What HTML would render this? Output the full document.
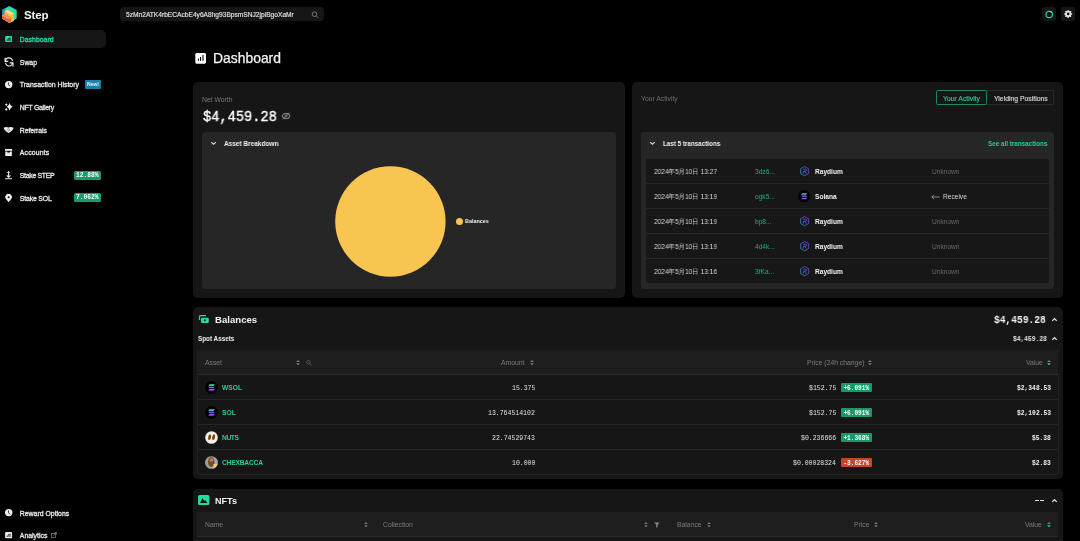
<!DOCTYPE html>
<html><head><meta charset="utf-8">
<style>
*{margin:0;padding:0;box-sizing:border-box}
html,body{width:1080px;height:541px;overflow:hidden;background:#000;color:#fff;font-family:"Liberation Sans",sans-serif}
.a,.nav,.row,.thc{will-change:transform}
.a{position:absolute;white-space:nowrap}
.mono{font-family:"Liberation Mono",monospace}
.nav{position:absolute;left:0;width:105px;height:18px;font-size:6.9px;color:#e8e8e8;white-space:nowrap}
.nav svg{position:absolute;left:4px;top:4px}
.nav .t{position:absolute;left:19.8px;top:1px;line-height:18px;-webkit-text-stroke:0.3px currentColor}
.badge{position:absolute;left:73.5px;top:4.8px;height:8.8px;width:27.5px;background:#179c6c;border-radius:1.5px;color:#fff;font-family:"Liberation Mono",monospace;font-size:6.3px;font-weight:bold;line-height:9px;text-align:center}
.card{position:absolute;background:#161616;border-radius:5px}
.muted{color:#8a8a8a}
.green{color:#25d09a}
.row{position:absolute;height:25px;font-size:6.6px;line-height:25px;white-space:nowrap}
.th{position:absolute;background:#1e1e1e;border-bottom:1px solid #2a2a2a;height:25px}
.thc{position:absolute;top:0;line-height:26px;font-size:6.8px;color:#7c7c7c;white-space:nowrap}
.sort{position:absolute;width:4px;height:7px}
.sep{position:absolute;height:1px;background:#262626}
.pb{display:inline-block;width:31px;height:9px;line-height:9px;border-radius:1.5px;text-align:center;font-weight:bold;color:#fff;vertical-align:middle;font-size:6.1px}
</style></head><body>

<!-- Logo -->
<svg class="a" style="left:0;top:3px" width="20" height="22" viewBox="0 0 20 22">
  <polygon points="9.3,3 16.7,7 16.7,15.5 9.3,20 2,15.5 2,7" fill="#28dcae"/>
  <polygon points="2,7 5.2,5.2 5.2,12 2,13.8" fill="#2a8fc4"/>
  <polygon points="4.5,8.5 7.5,6.8 14,10.5 14,18 9.3,20 4.5,17" fill="#f9bf3b"/>
  <polygon points="4.5,8.5 7.5,6.8 14,10.5 11,12.3" fill="#fcd58a"/>
  <polygon points="2,12.5 4.5,11 11,14.7 11,18.5 9.3,20 2,15.5" fill="#f26434"/>
  <polygon points="2,12.5 4.5,11 11,14.7 8.5,16.2" fill="#f8946c"/>
</svg>
<div class="a" style="left:24px;top:6px;font-size:11.6px;letter-spacing:-0.2px;font-weight:bold;line-height:16px;color:#f2f2f2;top:7px">Step</div>

<!-- Search -->
<div class="a" style="left:120px;top:7px;width:204px;height:14.3px;background:#161616;border-radius:4px"></div>
<div class="a" style="left:126px;top:8px;line-height:14px;font-size:6.63px;color:#e0e0e0;-webkit-text-stroke:0.15px #e0e0e0">5zMn2ATK4rbECAcbE4y6A8hg93BpsmSNJ2jpiBgoXaMr</div>
<svg class="a" style="left:311px;top:11px" width="8" height="8" viewBox="0 0 8 8"><circle cx="3.5" cy="3.2" r="2.3" stroke="#8a8a8a" stroke-width="0.85" fill="none"/><line x1="5.2" y1="4.9" x2="7.1" y2="6.8" stroke="#8a8a8a" stroke-width="0.9"/></svg>

<!-- top-right buttons -->
<div class="a" style="left:1042px;top:7px;width:14px;height:14px;background:#161616;border-radius:3px"></div>
<svg class="a" style="left:1045px;top:10px" width="9" height="9" viewBox="0 0 9 9"><circle cx="4.2" cy="4.4" r="3.2" stroke="#27d9a3" stroke-width="1.1" fill="none"/><path d="M4.2 1.2 A3.2 3.2 0 0 1 7 2.8" stroke="#c8c8c8" stroke-width="1.1" fill="none"/></svg>
<div class="a" style="left:1061px;top:7px;width:14px;height:14px;background:#161616;border-radius:3px"></div>
<svg class="a" style="left:1063px;top:9px" width="10" height="10" viewBox="0 0 10 10"><g fill="#e6e6e6"><circle cx="5.2" cy="4.9" r="3"/><rect x="4.45" y="0.9" width="1.5" height="8" rx="0.5" transform="rotate(0.0 5.2 4.9)"/><rect x="4.45" y="0.9" width="1.5" height="8" rx="0.5" transform="rotate(45.0 5.2 4.9)"/><rect x="4.45" y="0.9" width="1.5" height="8" rx="0.5" transform="rotate(90.0 5.2 4.9)"/><rect x="4.45" y="0.9" width="1.5" height="8" rx="0.5" transform="rotate(135.0 5.2 4.9)"/></g><circle cx="5.2" cy="4.9" r="1.3" fill="#161616"/></svg>

<!-- Sidebar -->
<div class="nav" style="top:30px;width:105.8px;background:#161616;border-radius:0 5px 5px 0;color:#27d9a3">
  <svg width="10" height="10" viewBox="0 0 10 10" style="left:4px;top:4px"><rect x="1.1" y="1.9" width="7" height="6.1" rx="1" fill="#27d9a3"/><path d="M2.6 6.9 L5.6 3.4 L7.2 3.4 L7.2 6.9 Z" fill="#0d3a2c" fill-opacity="0.55"/><path d="M3 6.6 L5.4 3.8" stroke="#0b2a20" stroke-width="0.9"/></svg>
  <div class="t">Dashboard</div></div>
<div class="nav" style="top:53px"><svg width="12" height="11" viewBox="0 0 12 11" style="left:3px;top:4px"><g stroke="#eee" stroke-width="1.2" fill="none"><path d="M2.6 4.4 A3.4 3.4 0 0 1 9.4 4"/><path d="M9.4 5.4 A3.4 3.4 0 0 1 2.6 5.8"/><path d="M2.1 0.8 V4.3 H5.3"/><path d="M9.9 9.4 V5.8 H6.7"/></g></svg><div class="t">Swap</div></div>
<div class="nav" style="top:75px"><svg width="10" height="10" viewBox="0 0 10 10" style="left:4px;top:5px"><circle cx="4.7" cy="4.6" r="3.7" fill="#eee"/><path d="M4.4 2.4 L4.6 4.8 L6 6.3" stroke="#111" stroke-width="0.8" fill="none"/></svg><div class="t">Transaction History</div>
  <div class="a" style="left:85px;top:5px;width:16px;height:9px;background:#1d80aa;border-radius:1px;font-size:5px;font-weight:bold;line-height:9px;text-align:center;color:#e8f4fa">New!</div></div>
<div class="nav" style="top:98px"><svg width="10" height="10" viewBox="0 0 10 10" style="left:4px;top:5px"><path d="M5.6 -0.04999999999999982 Q6.2379999999999995 2.992 8.5 3.85 Q6.2379999999999995 4.708 5.6 7.75 Q4.962 4.708 2.6999999999999997 3.85 Q4.962 2.992 5.6 -0.04999999999999982ZM2.3 0.20000000000000018 Q2.86 1.04 3.6999999999999997 1.6 Q2.86 2.16 2.3 3.0 Q1.7399999999999998 2.16 0.8999999999999999 1.6 Q1.7399999999999998 1.04 2.3 0.20000000000000018ZM2.3 5.0 Q2.86 5.840000000000001 3.6999999999999997 6.4 Q2.86 6.96 2.3 7.800000000000001 Q1.7399999999999998 6.96 0.8999999999999999 6.4 Q1.7399999999999998 5.840000000000001 2.3 5.0Z" fill="#eee"/></svg><div class="t" style="letter-spacing:-0.26px">NFT Gallery</div></div>
<div class="nav" style="top:121px"><svg width="11" height="10" viewBox="0 0 11 10" style="left:3px;top:5px"><path d="M0.9 1.4 L3.6 0.9 L5.5 1.6 L7.4 0.9 L10.3 1.4 L10.3 3 L8 5.4 L5.6 7 L3.2 5.4 L0.9 3 Z" fill="#eee"/><path d="M3.6 3.1 L5.9 5.3 M4.9 2.4 L7.1 4.5" stroke="#333" stroke-width="0.55"/></svg><div class="t" style="letter-spacing:-0.11px">Referrals</div></div>
<div class="nav" style="top:143px"><svg width="10" height="10" viewBox="0 0 10 10" style="left:4px;top:5px"><rect x="1" y="1" width="7.2" height="1.8" fill="#eee"/><path d="M1.3 3.5 H3.3 V4.6 H5.9 V3.5 H7.9 V8 H1.3 Z" fill="#eee"/></svg><div class="t" style="letter-spacing:0.15px">Accounts</div></div>
<div class="nav" style="top:166px"><svg width="10" height="10" viewBox="0 0 10 10" style="left:4px;top:5px"><path d="M4.6 0.4 L4.6 6.2" stroke="#eee" stroke-width="1.1"/><path d="M3.3 1.8 L4.6 0.5 L5.9 1.8" stroke="#eee" stroke-width="0.9" fill="none"/><path d="M2.8 4.4 L4.6 6.3 L6.4 4.4" stroke="#eee" stroke-width="1.1" fill="none"/><rect x="1.2" y="7.2" width="6.8" height="1" fill="#eee"/></svg><div class="t" style="letter-spacing:-0.3px">Stake STEP</div><div class="badge">12.88%</div></div>
<div class="nav" style="top:189px"><svg width="10" height="10" viewBox="0 0 10 10" style="left:4px;top:5px"><path d="M4.6 8.2 L2 5.1 A3.3 3.3 0 1 1 7.2 5.1 Z" fill="#eee"/><circle cx="4.6" cy="3.3" r="1" fill="#111"/></svg><div class="t" style="letter-spacing:-0.16px">Stake SOL</div><div class="badge" style="top:4.2px">7.062%</div></div>
<div class="nav" style="top:504px"><svg width="10" height="10" viewBox="0 0 10 10" style="left:4px;top:4px"><circle cx="4.7" cy="4.6" r="3.7" fill="#eee"/><path d="M4.4 2.4 L4.6 4.8 L6 6.3" stroke="#111" stroke-width="0.8" fill="none"/></svg><div class="t">Reward Options</div></div>
<div class="nav" style="top:526px"><svg width="10" height="10" viewBox="0 0 10 10" style="left:4px;top:4px"><rect x="1.1" y="2" width="7" height="6.3" rx="1" fill="#eee"/><path d="M2.6 7 L5.6 3.5 L7.2 3.5 L7.2 7 Z" fill="#333" fill-opacity="0.5"/><path d="M3 6.7 L5.4 3.9" stroke="#222" stroke-width="0.9"/></svg><div class="t">Analytics</div>
  <svg width="6" height="6" viewBox="0 0 6 6" style="left:51px;top:6px"><rect x="0.5" y="1.5" width="4" height="4" stroke="#888" stroke-width="0.7" fill="none"/><path d="M2.5 3.5 L5.5 0.5 M3.5 0.5 H5.5 V2.5" stroke="#888" stroke-width="0.7" fill="none"/></svg></div>

<!-- Title -->
<svg class="a" style="left:195px;top:53px" width="11" height="11" viewBox="0 0 11 11"><rect x="0.3" y="0" width="10.8" height="10.7" rx="1.5" fill="#fff"/><rect x="2.9" y="5.6" width="1.1" height="2.2" rx="0.5" fill="#000"/><rect x="5" y="4" width="1.1" height="3.8" fill="#000"/><rect x="7.2" y="2" width="1.6" height="5.8" fill="#555"/></svg>
<div class="a" style="left:213px;top:49.5px;font-size:13.9px;line-height:17px;color:#f4f4f4;-webkit-text-stroke:0.25px #f4f4f4">Dashboard</div>

<!-- Net worth card -->
<div class="card" style="left:193px;top:82px;width:431.5px;height:216.3px"></div>
<div class="a muted" style="left:202px;top:96px;font-size:6.8px;line-height:8px;color:#7a7a7a">Net Worth</div>
<div class="a mono" style="left:203px;top:109px;font-size:14.2px;line-height:16px;-webkit-text-stroke:0.35px #fff;color:#fff;transform:scaleX(0.965);transform-origin:0 0">$4,459.28</div>
<svg class="a" style="left:281px;top:111px" width="10" height="10" viewBox="0 0 10 10"><ellipse cx="5" cy="5" rx="3.6" ry="2.6" stroke="#7e7e7e" stroke-width="1.2" fill="none"/><circle cx="5" cy="5" r="1.1" stroke="#7e7e7e" stroke-width="0.9" fill="none"/><line x1="1.6" y1="8.6" x2="8.6" y2="1.6" stroke="#7e7e7e" stroke-width="0.9"/></svg>
<div class="a" style="left:202px;top:132.3px;width:413.5px;height:157.2px;background:#262626;border-radius:4px"></div>
<svg class="a" style="left:210px;top:141px" width="7" height="5" viewBox="0 0 7 5"><path d="M1.3 1.2 L3.6 3.2 L5.9 1.2" stroke="#ddd" stroke-width="1.1" fill="none"/></svg>
<div class="a" style="left:224px;top:139px;font-size:7px;line-height:9px;font-weight:bold;color:#f0f0f0;transform:scaleX(0.925);transform-origin:0 0">Asset Breakdown</div>
<svg class="a" style="left:334px;top:165px" width="112" height="112"><circle cx="56.4" cy="56.5" r="55.2" fill="#f8c550"/></svg>
<div class="a" style="left:455.5px;top:217.5px;width:7px;height:7px;border-radius:50%;background:#f8c550"></div>
<div class="a" style="left:465px;top:217px;font-size:5.4px;line-height:8px;font-weight:bold;color:#f0f0f0">Balances</div>

<!-- Activity card -->
<div class="card" style="left:632px;top:82px;width:431px;height:216.3px"></div>
<div class="a" style="left:641px;top:95px;font-size:6.8px;line-height:8px;color:#6e6e6e">Your Activity</div>
<div class="a" style="left:936px;top:90px;width:118px;height:15px;border:1px solid #2a2a2a;border-radius:2px"></div>
<div class="a" style="left:936px;top:90px;width:51px;height:15px;border:1px solid #1a8865;border-radius:1.5px;background:#151716"></div>
<div class="a green" style="left:943px;top:91px;line-height:15px;font-size:6.85px;color:#22c493;-webkit-text-stroke:0.2px #22c493">Your Activity</div>
<div class="a" style="left:993.5px;top:91px;line-height:15px;font-size:6.85px;color:#d0d0d0;-webkit-text-stroke:0.2px #d0d0d0">Yielding Positions</div>
<div class="a" style="left:641px;top:132.3px;width:413px;height:157.2px;background:#262626;border-radius:4px"></div>
<svg class="a" style="left:649px;top:141px" width="7" height="5" viewBox="0 0 7 5"><path d="M1.1 1.2 L3.4 3.2 L5.7 1.2" stroke="#ddd" stroke-width="1.1" fill="none"/></svg>
<div class="a" style="left:663px;top:140px;font-size:7.1px;line-height:9px;font-weight:bold;color:#f0f0f0;transform:scaleX(0.885);transform-origin:0 0">Last 5 transactions</div>
<div class="a green" style="left:987.5px;top:140px;font-size:7.1px;line-height:9px;font-weight:bold;transform:scaleX(0.89);transform-origin:0 0">See all transactions</div>
<div class="a" style="left:646px;top:159px;width:403px;height:124px;background:#171717;border-radius:1px 1px 3px 3px"></div>
<div class="sep" style="left:646px;top:183px;width:403px"></div>
<div class="sep" style="left:646px;top:208px;width:403px"></div>
<div class="sep" style="left:646px;top:233px;width:403px"></div>
<div class="sep" style="left:646px;top:258px;width:403px"></div>
<!--ACTS-->
<div class="row" style="left:654px;top:159px;color:#d6d6d6;font-size:7.3px;transform:scaleX(0.905);transform-origin:0 0">2024年5月10日 13:27</div>
<div class="row green" style="left:755px;top:159px;color:#1fae82">3dz6...</div>
<svg class="a" style="left:799.8px;top:165.6px" width="10" height="11" viewBox="0 0 10 11"><defs><linearGradient id="rg0" x1="0" y1="1" x2="1" y2="0"><stop offset="0" stop-color="#2a9a9a"/><stop offset="0.5" stop-color="#4a5fd0"/><stop offset="1" stop-color="#9a30d8"/></linearGradient></defs><polygon points="4.6,0.5 8.7,2.8 8.7,7.5 4.6,9.8 0.6,7.5 0.6,2.8" stroke="url(#rg0)" stroke-width="0.85" fill="none"/><path d="M3.3 7.6 V5.2 H5.6 Q6.7 5.2 6.7 4.2 Q6.7 3.2 5.6 3.2 H3.2 M4.9 5.4 L6.4 7.6" stroke="#4f6ae0" stroke-width="0.8" fill="none"/></svg>
<div class="row" style="left:815px;top:159px;color:#f2f2f2;font-weight:bold">Raydium</div>
<div class="row" style="left:932px;top:159px;color:#6a6a6a">Unknown</div>
<div class="row" style="left:654px;top:184px;color:#d6d6d6;font-size:7.3px;transform:scaleX(0.905);transform-origin:0 0">2024年5月10日 13:19</div>
<div class="row green" style="left:755px;top:184px;color:#1fae82">ogk5...</div>
<svg class="a" style="left:798.3px;top:189.8px" width="12.4" height="12.4" viewBox="0 0 13 13"><circle cx="6.5" cy="6.5" r="6.4" fill="#000"/><defs><linearGradient id="sg" gradientUnits="userSpaceOnUse" x1="0" y1="3.3" x2="0" y2="9.7"><stop offset="0" stop-color="#2ee8b0"/><stop offset="0.5" stop-color="#7a6ae8"/><stop offset="1" stop-color="#b040f0"/></linearGradient></defs><g fill="url(#sg)"><polygon points="4.6,3.3 9.8,3.3 8.5,4.9 3.3,4.9"/><polygon points="3.3,5.8 8.5,5.8 9.8,7.2 4.6,7.2"/><polygon points="4.6,8.1 9.8,8.1 8.5,9.7 3.3,9.7"/></g></svg>
<div class="row" style="left:815px;top:184px;color:#f2f2f2;font-weight:bold">Solana</div>
<svg class="a" style="left:931px;top:194px" width="9" height="6" viewBox="0 0 9 6"><path d="M8.5 3 H1 M3 0.8 L0.8 3 L3 5.2" stroke="#aaa" stroke-width="0.8" fill="none"/></svg>
<div class="row" style="left:943px;top:184px;color:#d6d6d6">Receive</div>
<div class="row" style="left:654px;top:209px;color:#d6d6d6;font-size:7.3px;transform:scaleX(0.905);transform-origin:0 0">2024年5月10日 13:19</div>
<div class="row green" style="left:755px;top:209px;color:#1fae82">bp8...</div>
<svg class="a" style="left:799.8px;top:215.6px" width="10" height="11" viewBox="0 0 10 11"><defs><linearGradient id="rg2" x1="0" y1="1" x2="1" y2="0"><stop offset="0" stop-color="#2a9a9a"/><stop offset="0.5" stop-color="#4a5fd0"/><stop offset="1" stop-color="#9a30d8"/></linearGradient></defs><polygon points="4.6,0.5 8.7,2.8 8.7,7.5 4.6,9.8 0.6,7.5 0.6,2.8" stroke="url(#rg2)" stroke-width="0.85" fill="none"/><path d="M3.3 7.6 V5.2 H5.6 Q6.7 5.2 6.7 4.2 Q6.7 3.2 5.6 3.2 H3.2 M4.9 5.4 L6.4 7.6" stroke="#4f6ae0" stroke-width="0.8" fill="none"/></svg>
<div class="row" style="left:815px;top:209px;color:#f2f2f2;font-weight:bold">Raydium</div>
<div class="row" style="left:932px;top:209px;color:#6a6a6a">Unknown</div>
<div class="row" style="left:654px;top:234px;color:#d6d6d6;font-size:7.3px;transform:scaleX(0.905);transform-origin:0 0">2024年5月10日 13:19</div>
<div class="row green" style="left:755px;top:234px;color:#1fae82">4d4k...</div>
<svg class="a" style="left:799.8px;top:240.6px" width="10" height="11" viewBox="0 0 10 11"><defs><linearGradient id="rg3" x1="0" y1="1" x2="1" y2="0"><stop offset="0" stop-color="#2a9a9a"/><stop offset="0.5" stop-color="#4a5fd0"/><stop offset="1" stop-color="#9a30d8"/></linearGradient></defs><polygon points="4.6,0.5 8.7,2.8 8.7,7.5 4.6,9.8 0.6,7.5 0.6,2.8" stroke="url(#rg3)" stroke-width="0.85" fill="none"/><path d="M3.3 7.6 V5.2 H5.6 Q6.7 5.2 6.7 4.2 Q6.7 3.2 5.6 3.2 H3.2 M4.9 5.4 L6.4 7.6" stroke="#4f6ae0" stroke-width="0.8" fill="none"/></svg>
<div class="row" style="left:815px;top:234px;color:#f2f2f2;font-weight:bold">Raydium</div>
<div class="row" style="left:932px;top:234px;color:#6a6a6a">Unknown</div>
<div class="row" style="left:654px;top:259px;color:#d6d6d6;font-size:7.3px;transform:scaleX(0.905);transform-origin:0 0">2024年5月10日 13:16</div>
<div class="row green" style="left:755px;top:259px;color:#1fae82">3fKa...</div>
<svg class="a" style="left:799.8px;top:265.6px" width="10" height="11" viewBox="0 0 10 11"><defs><linearGradient id="rg4" x1="0" y1="1" x2="1" y2="0"><stop offset="0" stop-color="#2a9a9a"/><stop offset="0.5" stop-color="#4a5fd0"/><stop offset="1" stop-color="#9a30d8"/></linearGradient></defs><polygon points="4.6,0.5 8.7,2.8 8.7,7.5 4.6,9.8 0.6,7.5 0.6,2.8" stroke="url(#rg4)" stroke-width="0.85" fill="none"/><path d="M3.3 7.6 V5.2 H5.6 Q6.7 5.2 6.7 4.2 Q6.7 3.2 5.6 3.2 H3.2 M4.9 5.4 L6.4 7.6" stroke="#4f6ae0" stroke-width="0.8" fill="none"/></svg>
<div class="row" style="left:815px;top:259px;color:#f2f2f2;font-weight:bold">Raydium</div>
<div class="row" style="left:932px;top:259px;color:#6a6a6a">Unknown</div>
<!--/ACTS-->

<!-- Balances card -->
<div class="card" style="left:193px;top:307px;width:870px;height:172px"></div>
<svg class="a" style="left:198px;top:314px" width="12" height="10" viewBox="0 0 12 10"><path d="M1.5 6 V2.8 Q1.5 1.6 2.7 1.6 H8" stroke="#27d9a3" stroke-width="1.3" fill="none"/><rect x="3" y="3.8" width="7.8" height="5.2" rx="1.3" fill="#27d9a3"/><circle cx="6.8" cy="6.3" r="1" fill="#161616"/></svg>
<div class="a" style="left:214.5px;top:313px;font-size:9.6px;line-height:14px;font-weight:bold;color:#f2f2f2">Balances</div>
<div class="a mono" style="left:993.5px;top:312.5px;font-size:10.3px;line-height:14px;font-weight:bold;color:#f2f2f2;transform:scaleX(0.93);transform-origin:0 0">$4,459.28</div>
<svg class="a" style="left:1051px;top:317px" width="7" height="5" viewBox="0 0 7 5"><path d="M1.2 3.9 L3.5 1.7 L5.8 3.9" stroke="#e0e0e0" stroke-width="1.2" fill="none"/></svg>
<div class="a" style="left:198px;top:335px;font-size:6.34px;line-height:8px;font-weight:bold;color:#f0f0f0">Spot Assets</div>
<div class="a mono" style="left:1013px;top:335.5px;font-size:6.6px;line-height:8px;font-weight:bold;color:#e8e8e8;transform:scaleX(0.95);transform-origin:0 0">$4,459.28</div>
<svg class="a" style="left:1051px;top:336px" width="7" height="5" viewBox="0 0 7 5"><path d="M1.2 3.9 L3.5 1.7 L5.8 3.9" stroke="#e0e0e0" stroke-width="1.2" fill="none"/></svg>
<div class="th" style="left:197px;top:350px;width:861px"></div>
<div class="thc" style="left:205px;top:350px">Asset</div>
<div class="thc" style="left:501px;top:350px">Amount</div>
<div class="thc" style="left:807px;top:350px">Price (24h change)</div>
<div class="thc" style="left:1025.5px;top:350px">Value</div>
<svg class="a" style="left:295.5px;top:359.7px" width="4" height="6" viewBox="0 0 4 6"><path d="M2 0 L3.9 2.1 H0.1 Z" fill="#7a7a7a"/><path d="M0.1 3.2 H3.9 L2 5.3 Z" fill="#7a7a7a"/></svg><svg class="a" style="left:306px;top:359.5px" width="6" height="6" viewBox="0 0 6 6"><circle cx="2.4" cy="2.3" r="1.7" stroke="#5c5c5c" stroke-width="0.9" fill="none"/><path d="M3.6 3.5 L5.6 5.5" stroke="#5c5c5c" stroke-width="0.9"/></svg><svg class="a" style="left:530.3px;top:359.7px" width="4" height="6" viewBox="0 0 4 6"><path d="M2 0 L3.9 2.1 H0.1 Z" fill="#7a7a7a"/><path d="M0.1 3.2 H3.9 L2 5.3 Z" fill="#7a7a7a"/></svg><svg class="a" style="left:868px;top:359.7px" width="4" height="6" viewBox="0 0 4 6"><path d="M2 0 L3.9 2.1 H0.1 Z" fill="#7a7a7a"/><path d="M0.1 3.2 H3.9 L2 5.3 Z" fill="#7a7a7a"/></svg><svg class="a" style="left:1047px;top:359.7px" width="4" height="6" viewBox="0 0 4 6"><path d="M2 0 L3.9 2.1 H0.1 Z" fill="#7a7a7a"/><path d="M0.1 3.2 H3.9 L2 5.3 Z" fill="#27d9a3"/></svg>
<!--BALS-->
<svg class="a" style="left:205px;top:381px" width="13" height="13" viewBox="0 0 13 13"><circle cx="6.5" cy="6.5" r="6.4" fill="#000"/><defs><linearGradient id="bsg0" gradientUnits="userSpaceOnUse" x1="0" y1="3.3" x2="0" y2="9.7"><stop offset="0" stop-color="#2ee8b0"/><stop offset="0.5" stop-color="#7a6ae8"/><stop offset="1" stop-color="#b040f0"/></linearGradient></defs><g fill="url(#bsg0)"><polygon points="4.6,3.3 9.8,3.3 8.5,4.9 3.3,4.9"/><polygon points="3.3,5.8 8.5,5.8 9.8,7.2 4.6,7.2"/><polygon points="4.6,8.1 9.8,8.1 8.5,9.7 3.3,9.7"/></g></svg>
<div class="row green" style="left:222px;top:375px;font-weight:bold;font-size:6.7px;letter-spacing:0">WSOL</div>
<div class="row mono" style="right:545px;top:375.7px;color:#e0e0e0;font-size:6.5px">15.375</div>
<div class="row mono" style="right:244px;top:375.7px;color:#e0e0e0;font-size:6.5px">$152.75</div>
<div class="a mono" style="left:841px;top:383px;width:31px;height:8.7px;line-height:10.5px;border-radius:1px;overflow:hidden;text-align:center;font-weight:bold;color:#fff;font-size:6.8px;background:#169a68"><span style="display:inline-block;transform:scaleX(0.9)">+6.091%</span></div>
<div class="row mono" style="right:29px;top:376px;color:#f0f0f0;font-size:6.3px;font-weight:bold">$2,348.53</div>
<div class="sep" style="left:197px;top:399px;width:861px"></div>
<svg class="a" style="left:205px;top:406px" width="13" height="13" viewBox="0 0 13 13"><circle cx="6.5" cy="6.5" r="6.4" fill="#000"/><defs><linearGradient id="bsg1" gradientUnits="userSpaceOnUse" x1="0" y1="3.3" x2="0" y2="9.7"><stop offset="0" stop-color="#2ee8b0"/><stop offset="0.5" stop-color="#7a6ae8"/><stop offset="1" stop-color="#b040f0"/></linearGradient></defs><g fill="url(#bsg1)"><polygon points="4.6,3.3 9.8,3.3 8.5,4.9 3.3,4.9"/><polygon points="3.3,5.8 8.5,5.8 9.8,7.2 4.6,7.2"/><polygon points="4.6,8.1 9.8,8.1 8.5,9.7 3.3,9.7"/></g></svg>
<div class="row green" style="left:222px;top:400px;font-weight:bold;font-size:6.7px;letter-spacing:0">SOL</div>
<div class="row mono" style="right:545px;top:400.7px;color:#e0e0e0;font-size:6.5px">13.764514102</div>
<div class="row mono" style="right:244px;top:400.7px;color:#e0e0e0;font-size:6.5px">$152.75</div>
<div class="a mono" style="left:841px;top:408px;width:31px;height:8.7px;line-height:10.5px;border-radius:1px;overflow:hidden;text-align:center;font-weight:bold;color:#fff;font-size:6.8px;background:#169a68"><span style="display:inline-block;transform:scaleX(0.9)">+6.091%</span></div>
<div class="row mono" style="right:29px;top:401px;color:#f0f0f0;font-size:6.3px;font-weight:bold">$2,102.53</div>
<div class="sep" style="left:197px;top:424px;width:861px"></div>
<svg class="a" style="left:205px;top:431px" width="13" height="13" viewBox="0 0 13 13"><circle cx="6.5" cy="6.5" r="6.3" fill="#f6f2ea"/><ellipse cx="4.6" cy="6.3" rx="1.5" ry="3" transform="rotate(12 4.6 6.3)" fill="#7a4f1c"/><ellipse cx="8.6" cy="6.3" rx="1.5" ry="3" transform="rotate(12 8.6 6.3)" fill="#7a4f1c"/></svg>
<div class="row green" style="left:222px;top:425px;font-weight:bold;font-size:6.7px;letter-spacing:-0.4px">NUTS</div>
<div class="row mono" style="right:545px;top:425.7px;color:#e0e0e0;font-size:6.5px">22.74529743</div>
<div class="row mono" style="right:244px;top:425.7px;color:#e0e0e0;font-size:6.5px">$0.236666</div>
<div class="a mono" style="left:841px;top:433px;width:31px;height:8.7px;line-height:10.5px;border-radius:1px;overflow:hidden;text-align:center;font-weight:bold;color:#fff;font-size:6.8px;background:#169a68"><span style="display:inline-block;transform:scaleX(0.9)">+1.368%</span></div>
<div class="row mono" style="right:29px;top:426px;color:#f0f0f0;font-size:6.3px;font-weight:bold">$5.38</div>
<div class="sep" style="left:197px;top:449px;width:861px"></div>
<svg class="a" style="left:205px;top:456px" width="13" height="13" viewBox="0 0 13 13"><defs><clipPath id="cc"><circle cx="6.5" cy="6.5" r="6.3"/></clipPath></defs><g clip-path="url(#cc)"><rect width="13" height="13" fill="#b89aa8"/><rect x="0" y="0" width="5" height="13" fill="#8aa890"/><ellipse cx="6.2" cy="6" rx="3.2" ry="5" fill="#7a4a2a"/><circle cx="6.3" cy="4" r="1.8" fill="#c08060"/><rect x="8.5" y="8" width="4.5" height="5" fill="#e8d070"/><rect x="10" y="3" width="3" height="5" fill="#90a8d8"/></g></svg>
<div class="row green" style="left:222px;top:450px;font-weight:bold;font-size:6.7px;letter-spacing:-0.22px">CHEXBACCA</div>
<div class="row mono" style="right:545px;top:450.7px;color:#e0e0e0;font-size:6.5px">10.000</div>
<div class="row mono" style="right:244px;top:450.7px;color:#e0e0e0;font-size:6.5px">$0.00028324</div>
<div class="a mono" style="left:841px;top:458px;width:31px;height:8.7px;line-height:10.5px;border-radius:1px;overflow:hidden;text-align:center;font-weight:bold;color:#fff;font-size:6.8px;background:#c4472c"><span style="display:inline-block;transform:scaleX(0.9)">-3.627%</span></div>
<div class="row mono" style="right:29px;top:451px;color:#f0f0f0;font-size:6.3px;font-weight:bold">$2.83</div>
<div class="a" style="left:197px;top:374px;width:862px;height:101px;border:1px solid #212121;border-top:none;border-radius:0 0 3px 3px"></div>
<!--/BALS-->

<!-- NFTs card -->
<div class="card" style="left:193px;top:488.5px;width:870px;height:60px"></div>
<svg class="a" style="left:198px;top:495px" width="12" height="10" viewBox="0 0 12 10"><rect x="0" y="0" width="11.4" height="10" rx="1.5" fill="#27d9a3"/><path d="M2.1 7.9 L4.5 2.9 L6.2 6.3 L7.1 4.8 L9.2 7.9 Z" fill="#111"/></svg>
<div class="a" style="left:214.5px;top:494px;font-size:9.05px;line-height:14px;font-weight:bold;color:#f2f2f2">NFTs</div>
<div class="a" style="left:1034.6px;top:500.2px;width:3.5px;height:1.3px;background:#e0e0e0"></div>
<div class="a" style="left:1040.4px;top:500.2px;width:3.5px;height:1.3px;background:#e0e0e0"></div>
<svg class="a" style="left:1051px;top:498px" width="7" height="5" viewBox="0 0 7 5"><path d="M1.2 3.9 L3.5 1.7 L5.8 3.9" stroke="#e0e0e0" stroke-width="1.2" fill="none"/></svg>
<div class="th" style="left:197px;top:512px;width:861px"></div>
<div class="thc" style="left:205px;top:512px">Name</div>
<div class="thc" style="left:383px;top:512px">Collection</div>
<div class="thc" style="left:677px;top:512px">Balance</div>
<div class="thc" style="left:854px;top:512px">Price</div>
<div class="thc" style="left:1025px;top:512px">Value</div>
<svg class="a" style="left:364px;top:521.8px" width="4" height="6" viewBox="0 0 4 6"><path d="M2 0 L3.9 2.1 H0.1 Z" fill="#7a7a7a"/><path d="M0.1 3.2 H3.9 L2 5.3 Z" fill="#7a7a7a"/></svg><svg class="a" style="left:643.7px;top:521.8px" width="4" height="6" viewBox="0 0 4 6"><path d="M2 0 L3.9 2.1 H0.1 Z" fill="#7a7a7a"/><path d="M0.1 3.2 H3.9 L2 5.3 Z" fill="#7a7a7a"/></svg><svg class="a" style="left:654.3px;top:521.6px" width="6" height="6" viewBox="0 0 6 6"><path d="M0.2 0.4 H5.6 L3.6 2.8 V5.2 L2.2 5.6 V2.8 Z" fill="#8a8a8a"/></svg><svg class="a" style="left:707px;top:521.8px" width="4" height="6" viewBox="0 0 4 6"><path d="M2 0 L3.9 2.1 H0.1 Z" fill="#7a7a7a"/><path d="M0.1 3.2 H3.9 L2 5.3 Z" fill="#7a7a7a"/></svg><svg class="a" style="left:874.3px;top:521.8px" width="4" height="6" viewBox="0 0 4 6"><path d="M2 0 L3.9 2.1 H0.1 Z" fill="#7a7a7a"/><path d="M0.1 3.2 H3.9 L2 5.3 Z" fill="#7a7a7a"/></svg><svg class="a" style="left:1047px;top:521.8px" width="4" height="6" viewBox="0 0 4 6"><path d="M2 0 L3.9 2.1 H0.1 Z" fill="#7a7a7a"/><path d="M0.1 3.2 H3.9 L2 5.3 Z" fill="#27d9a3"/></svg>

</body></html>
